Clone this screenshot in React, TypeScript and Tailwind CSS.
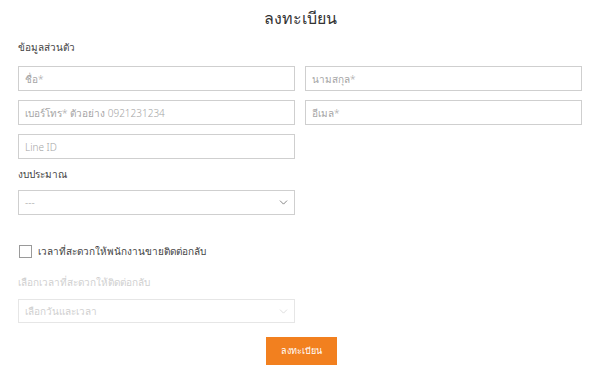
import { ChevronDown } from 'lucide-react';

const fieldClass =
  'h-[25px] w-full border border-[#cfcfcf] bg-white px-[6px] text-[10px] font-light text-[#333] placeholder:text-[#a5a5a5] outline-none';

const App = () => {
  return (
    <div className="min-h-[374px] bg-white px-[18px] font-['Noto_Sans',sans-serif] text-[#444]">
      <h1 className="pt-[8px] text-center text-[16px] font-light leading-[20px] text-[#333]">ลงทะเบียน</h1>

      <p className="mt-[12px] text-[10px] font-light leading-[14px]">ข้อมูลส่วนตัว</p>

      <div className="mt-[12px] grid grid-cols-2 gap-x-[10px] gap-y-[9px]">
        <input className={fieldClass} placeholder="ชื่อ*" />
        <input className={fieldClass} placeholder="นามสกุล*" />
        <input className={fieldClass} placeholder="เบอร์โทร* ตัวอย่าง 0921231234" />
        <input className={fieldClass} placeholder="อีเมล*" />
        <input className={fieldClass} placeholder="Line ID" />
      </div>

      <p className="mt-[8px] text-[10px] font-light leading-[14px]">งบประมาณ</p>

      <div className="mt-[9px] grid grid-cols-2 gap-x-[10px]">
        <div className="flex h-[25px] items-center justify-between border border-[#cfcfcf] pl-[6px] pr-[4px] text-[10px] font-light text-[#a5a5a5]">
          <span>---</span>
          <ChevronDown className="h-[13px] w-[13px] text-[#555]" strokeWidth={1.3} />
        </div>
      </div>

      <label className="mt-[29px] flex items-center gap-[6px] text-[10px] font-light leading-[14px]">
        <span className="ml-[1px] h-[13px] w-[13px] border border-[#9a9a9a] bg-white" />
        เวลาที่สะดวกให้พนักงานขายติดต่อกลับ
      </label>

      <p className="mt-[17px] text-[10px] font-light leading-[14px] text-[#d0d0d0]">เลือกเวลาที่สะดวกให้ติดต่อกลับ</p>

      <div className="mt-[10px] grid grid-cols-2 gap-x-[10px]">
        <div className="flex h-[24px] items-center justify-between border border-[#e6e6e6] pl-[6px] pr-[4px] text-[10px] font-light text-[#d0d0d0]">
          <span>เลือกวันและเวลา</span>
          <ChevronDown className="h-[13px] w-[13px] text-[#d0d0d0]" strokeWidth={1.3} />
        </div>
      </div>

      <div className="mt-[14px] flex justify-center">
        <button className="ml-[3px] h-[28px] w-[71px] bg-[#f2801f] text-[9px] text-white">ลงทะเบียน</button>
      </div>
    </div>
  );
};

export default App;
